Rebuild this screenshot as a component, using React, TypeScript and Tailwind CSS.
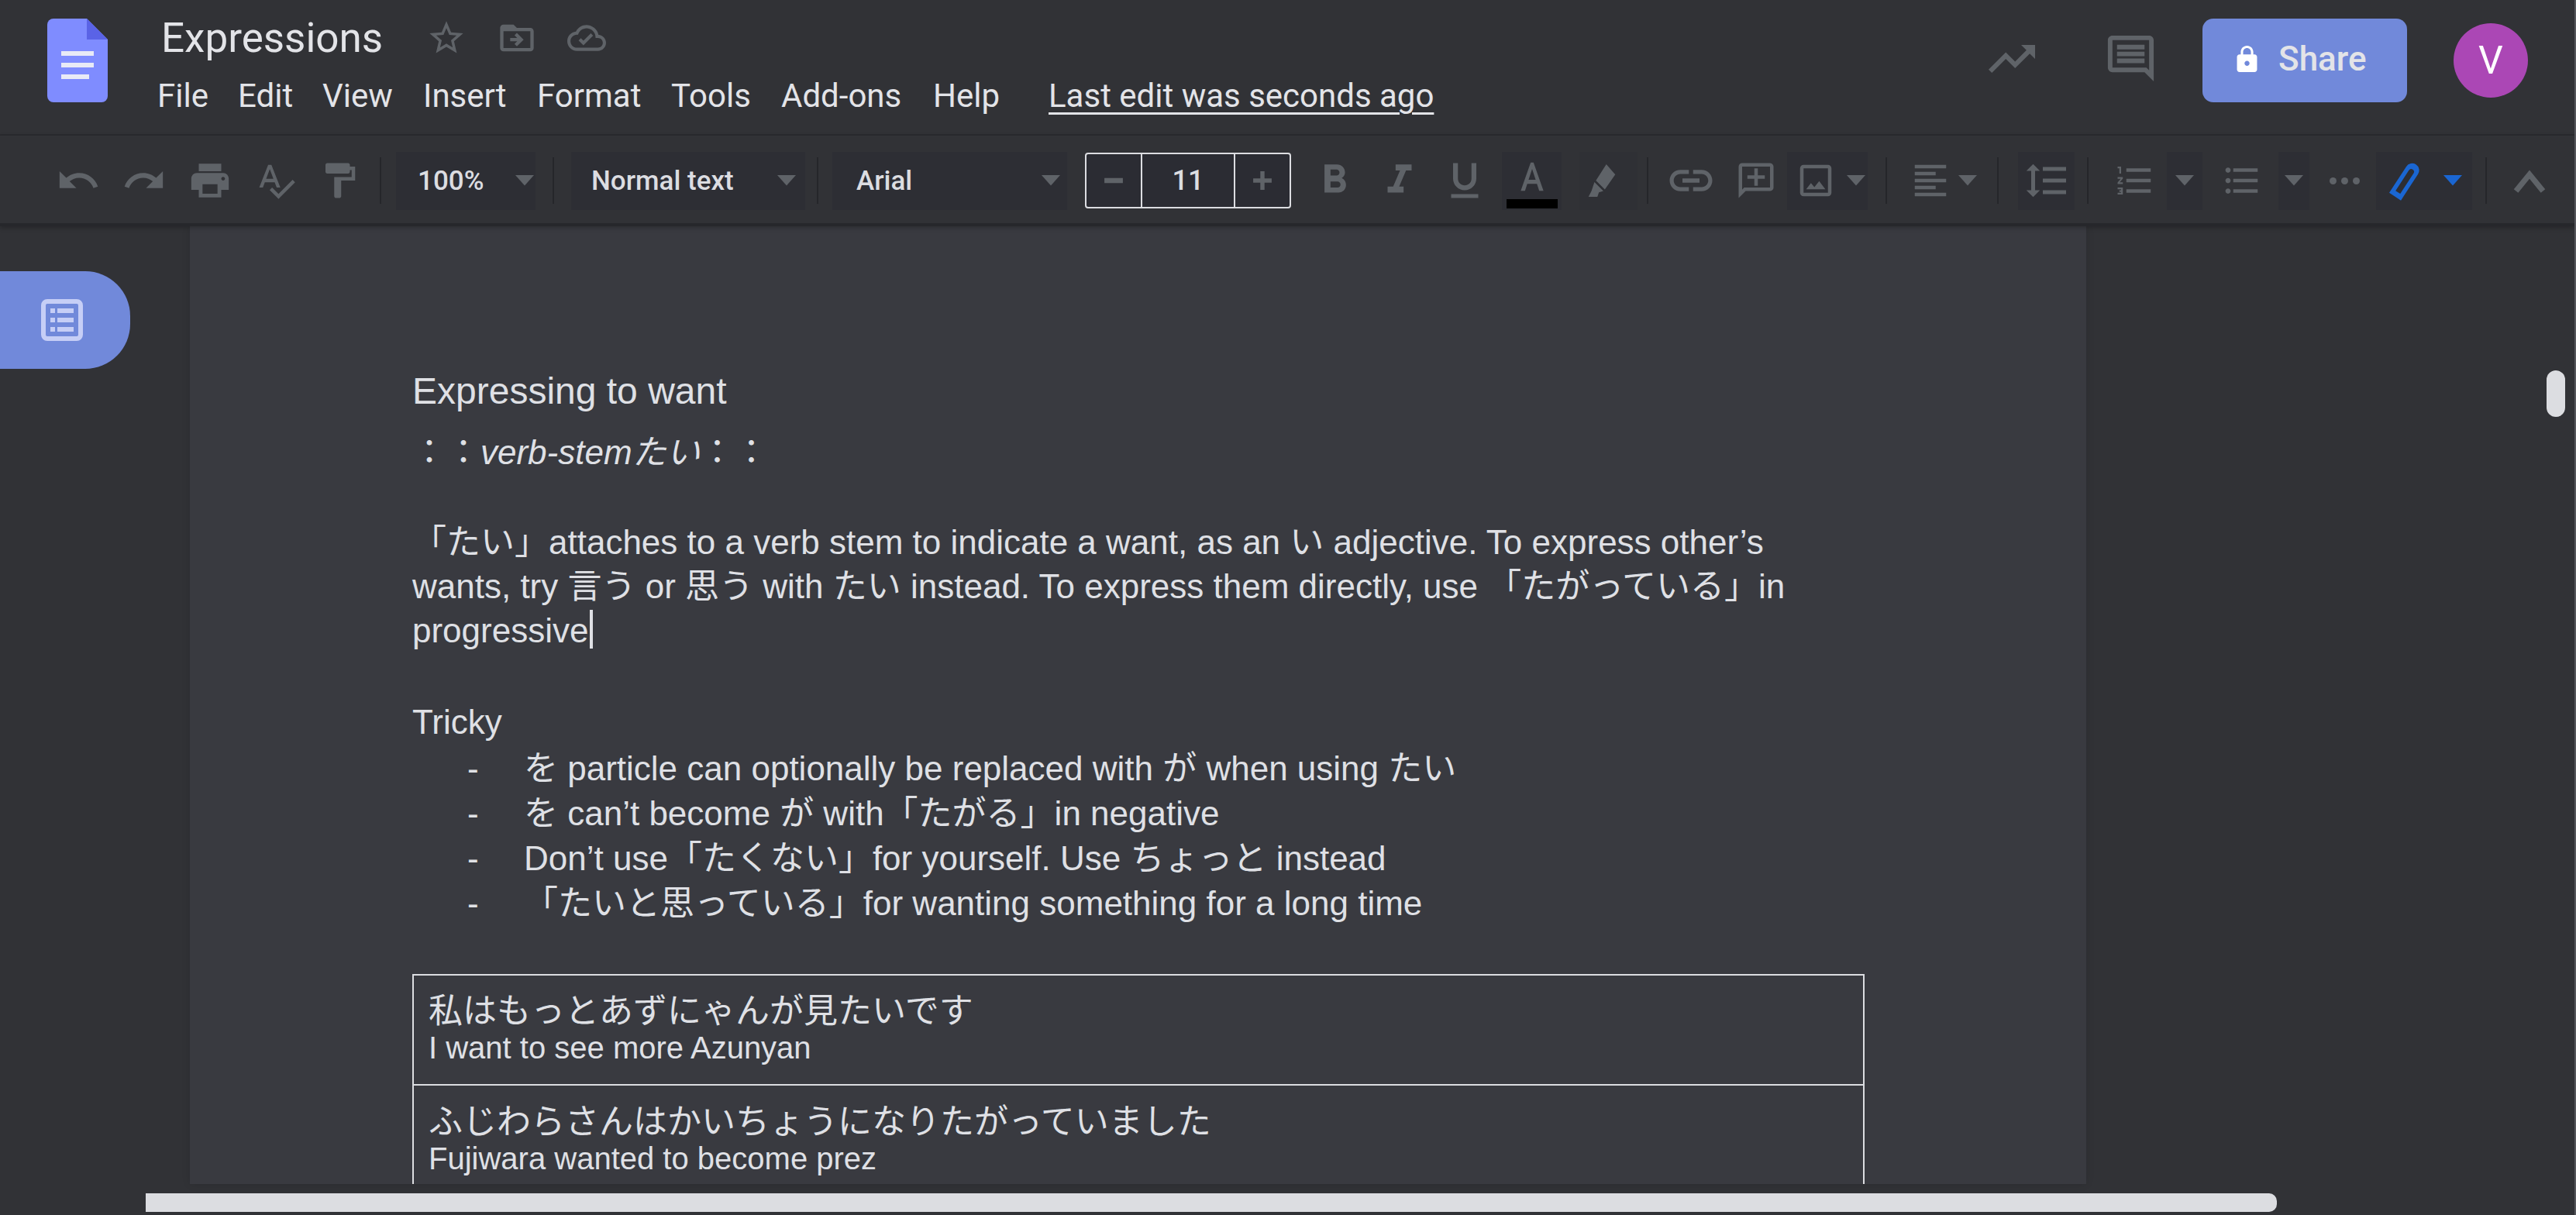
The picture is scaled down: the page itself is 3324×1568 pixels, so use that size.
import type { ReactNode } from 'react';

const GREY = '#5f6368';

function Caret({ color = GREY, size = 24 }: { color?: string; size?: number }) {
  return (
    <svg width={size} height={size * 0.56} viewBox="0 0 10 5.6" className="shrink-0">
      <path d="M0 0h10L5 5.6z" fill={color} />
    </svg>
  );
}

function Icon({ size = 58, children }: { size?: number; children: ReactNode }) {
  return (
    <svg width={size} height={size} viewBox="0 0 24 24" fill={GREY} className="shrink-0">
      {children}
    </svg>
  );
}

function Sep() {
  return <div className="w-[2px] h-[60px] bg-[#25262a] shrink-0" />;
}

function Gap({ w }: { w: string }) {
  return <div className={`${w} shrink-0`} />;
}

function ToolBtn({ w, dark, children }: { w: string; dark?: boolean; children: ReactNode }) {
  return (
    <div className={`${w} h-[75px] shrink-0 flex items-center justify-center ${dark ? 'bg-[#2d2e34]' : ''}`}>
      {children}
    </div>
  );
}

function Select({ w, pl, label, labelW }: { w: string; pl: string; label: string; labelW: string }) {
  return (
    <div className={`${w} ${pl} h-[75px] shrink-0 flex items-center bg-[#2d2e34]`}>
      <span className={`${labelW} text-[35px] leading-none font-medium text-[#dcdde1]`}>{label}</span>
      <Caret />
    </div>
  );
}

function DocsLogo() {
  return (
    <svg width="78" height="108" viewBox="0 0 78 108" className="shrink-0">
      <path d="M8 0h43l27 27v73a8 8 0 0 1-8 8H8a8 8 0 0 1-8-8V8a8 8 0 0 1 8-8z" fill="#7f8cff" />
      <path d="M51 0l27 27H51z" fill="#5a63e6" />
      <rect x="18" y="42" width="42" height="6" fill="#e8eaf6" />
      <rect x="18" y="57" width="42" height="6" fill="#e8eaf6" />
      <rect x="18" y="72" width="36" height="6" fill="#e8eaf6" />
    </svg>
  );
}

const MENUS = [
  ['File', 'w-[104px]'],
  ['Edit', 'w-[109px]'],
  ['View', 'w-[130px]'],
  ['Insert', 'w-[147px]'],
  ['Format', 'w-[173px]'],
  ['Tools', 'w-[142px]'],
  ['Add-ons', 'w-[196px]'],
  ['Help', 'w-[149px]'],
];

function Header() {
  return (
    <div className="h-[175px] flex border-b-2 border-[#2a2b2f] font-['Roboto',sans-serif] text-[#e3e4e8]">
      <div className="pl-[61px] pt-[24px] w-[203px] shrink-0">
        <DocsLogo />
      </div>
      <div className="flex-1 pt-[18px]">
        <div className="h-[62px] flex items-center pl-[5px]">
          <span className="w-[342px] text-[53px] leading-none">Expressions</span>
          <div className="w-[91px]">
            <Icon size={52}>
              <path d="M22 9.24l-7.19-.62L12 2 9.19 8.63 2 9.24l5.46 4.73L5.82 21 12 17.27 18.18 21l-1.63-7.03L22 9.24zM12 15.4l-3.76 2.27 1-4.28-3.32-2.88 4.38-.38L12 6.1l1.71 4.04 4.38.38-3.32 2.88 1 4.28L12 15.4z" />
            </Icon>
          </div>
          <div className="w-[91px]">
            <Icon size={52}>
              <path d="M20 6h-8l-2-2H4c-1.1 0-2 .9-2 2v12c0 1.1.9 2 2 2h16c1.1 0 2-.9 2-2V8c0-1.1-.9-2-2-2zm0 12H4V8h16v10zm-8.01-9l-1.41 1.41L12.16 12H8v2h4.16l-1.59 1.59L11.99 17 16 13.01 11.99 9z" />
            </Icon>
          </div>
          <Icon size={50}>
            <path d="M19.35 10.04A7.49 7.49 0 0 0 12 4C9.11 4 6.6 5.64 5.35 8.04A5.994 5.994 0 0 0 0 14c0 3.31 2.69 6 6 6h13c2.76 0 5-2.24 5-5 0-2.64-2.05-4.78-4.65-4.96zM19 18H6c-2.21 0-4-1.79-4-4s1.79-4 4-4h.71C7.37 7.69 9.48 6 12 6c3.04 0 5.5 2.46 5.5 5.5v.5H19c1.66 0 3 1.34 3 3s-1.34 3-3 3zm-9-1.5l-3-3 1.41-1.41L10 13.67l4.59-4.58L16 10.5l-6 6z" />
          </Icon>
        </div>
        <div className="h-[60px] mt-[14px] flex items-center text-[42px] leading-none">
          {MENUS.map(([label, w]) => (
            <span key={label} className={w}>{label}</span>
          ))}
          <span className="underline decoration-[3px] underline-offset-[7px]">Last edit was seconds ago</span>
        </div>
      </div>
      <div className="w-[282px] shrink-0 flex items-start pt-[40px]">
        <div className="w-[154px]">
          <Icon size={72}>
            <path d="M16 6l2.29 2.29-4.88 4.88-4-4L2 16.59 3.41 18l6-6 4 4 6.3-6.29L22 12V6z" />
          </Icon>
        </div>
        <Icon size={71}>
          <path d="M21.99 4c0-1.1-.89-2-1.99-2H4c-1.1 0-2 .9-2 2v12c0 1.1.9 2 2 2h14l4 4-.01-18zM20 4v13.17L18.83 16H4V4h16zM6 12h12v2H6zm0-3h12v2H6zm0-3h12v2H6z" />
        </Icon>
      </div>
      <div className="w-[264px] h-[108px] mt-[24px] pb-[4px] shrink-0 rounded-[14px] bg-[#7189da] flex items-center pl-[44px] gap-[27px]">
        <svg width="27" height="34" viewBox="4 1 16 21" fill="#fff" className="shrink-0">
          <path d="M18 8h-1V6c0-2.76-2.24-5-5-5S7 3.24 7 6v2H6c-1.1 0-2 .9-2 2v10c0 1.1.9 2 2 2h12c1.1 0 2-.9 2-2V10c0-1.1-.9-2-2-2zm-6 9c-1.1 0-2-.9-2-2s.9-2 2-2 2 .9 2 2-.9 2-2 2zm3.1-9H8.9V6c0-1.71 1.39-3.1 3.1-3.1s3.1 1.39 3.1 3.1v2z" />
        </svg>
        <span className="text-[44px] leading-none font-medium text-[#e3e4e8]">Share</span>
      </div>
      <div className="w-[216px] shrink-0 pl-[60px] pt-[30px]">
        <div className="w-[96px] h-[96px] rounded-full bg-[#ab47b5] flex items-center justify-center text-[50px] leading-none text-white">
          V
        </div>
      </div>
    </div>
  );
}

function Toolbar() {
  return (
    <div className="h-[117px] pt-[3px] flex items-center pl-[58px] border-b-4 border-[#26272b] shadow-[0_2px_6px_rgba(0,0,0,0.25)] relative z-10 font-['Roboto',sans-serif]">
      <ToolBtn w="w-[85px]"><Icon><path d="M12.5 8c-2.65 0-5.05.99-6.9 2.6L2 7v9h9l-3.62-3.62c1.39-1.16 3.16-1.88 5.12-1.88 3.54 0 6.55 2.31 7.6 5.5l2.37-.78C21.08 11.03 17.15 8 12.5 8z" /></Icon></ToolBtn>
      <ToolBtn w="w-[85px]"><Icon><path d="M18.4 10.6C16.55 8.99 14.15 8 11.5 8c-4.65 0-8.58 3.03-9.96 7.22L3.9 16c1.05-3.19 4.05-5.5 7.6-5.5 1.95 0 3.73.72 5.12 1.88L13 16h9V7l-3.6 3.6z" /></Icon></ToolBtn>
      <ToolBtn w="w-[85px]"><Icon><path d="M19 8H5c-1.66 0-3 1.34-3 3v6h4v4h12v-4h4v-6c0-1.66-1.34-3-3-3zm-3 11H8v-5h8v5zm3-7c-.55 0-1-.45-1-1s.45-1 1-1 1 .45 1 1-.45 1-1 1zm-1-9H6v4h12V3z" /></Icon></ToolBtn>
      <ToolBtn w="w-[85px]"><Icon size={54}><path d="M12.45 16h2.09L9.43 3H7.57L2.46 16h2.09l1.12-3h5.64l1.14 3zm-6.02-5L8.5 5.48 10.57 11H6.43zm15.16.59l-8.09 8.09L9.83 16l-1.41 1.41 5.09 5.09L23 13l-1.41-1.41z" /></Icon></ToolBtn>
      <ToolBtn w="w-[80px]"><Icon size={54}><path d="M18 4V3c0-.55-.45-1-1-1H5c-.55 0-1 .45-1 1v4c0 .55.45 1 1 1h12c.55 0 1-.45 1-1V6h1v4H9v11c0 .55.45 1 1 1h2c.55 0 1-.45 1-1v-9h8V4h-3z" /></Icon></ToolBtn>
      <Gap w="w-[12px]" />
      <Sep />
      <Gap w="w-[19px]" />
      <div className="w-[180px] h-[75px] shrink-0 pl-[28px] flex items-center bg-[#2d2e34]">
        <span className="w-[126px] text-[35px] leading-none font-medium text-[#dcdde1]">100%</span>
        <Caret />
      </div>
      <Gap w="w-[22px]" />
      <Sep />
      <Gap w="w-[22px]" />
      <Select w="w-[302px]" pl="pl-[26px]" label="Normal text" labelW="w-[240px]" />
      <Gap w="w-[15px]" />
      <Sep />
      <Gap w="w-[18px]" />
      <Select w="w-[303px]" pl="pl-[31px]" label="Arial" labelW="w-[239px]" />
      <Gap w="w-[23px]" />
      <div className="w-[266px] h-[72px] shrink-0 flex border-2 border-[#dcdde1] rounded-[4px] bg-[#2b2c33] text-[#dcdde1]">
        <div className="w-[72px] flex items-center justify-center border-r-2 border-[#dcdde1]">
          <svg width="26" height="26" viewBox="0 0 24 24" fill={GREY}><rect x="1" y="9" width="22" height="6" /></svg>
        </div>
        <div className="flex-1 flex items-center justify-center text-[36px] leading-none font-medium">11</div>
        <div className="w-[72px] flex items-center justify-center border-l-2 border-[#dcdde1]">
          <svg width="26" height="26" viewBox="0 0 24 24" fill={GREY}><path d="M9.5 1h5v8.5H23v5h-8.5V23h-5v-8.5H1v-5h8.5z" /></svg>
        </div>
      </div>
      <Gap w="w-[14px]" />
      <ToolBtn w="w-[84px]"><Icon size={62}><path d="M15.6 10.79c.97-.67 1.65-1.77 1.65-2.79 0-2.26-1.75-4-4-4H7v14h7.04c2.09 0 3.71-1.7 3.71-3.79 0-1.52-.86-2.82-2.15-3.42zM10 6.5h3c.83 0 1.5.67 1.5 1.5s-.67 1.5-1.5 1.5h-3v-3zm3.5 9H10v-3h3.5c.83 0 1.5.67 1.5 1.5s-.67 1.5-1.5 1.5z" /></Icon></ToolBtn>
      <ToolBtn w="w-[84px]"><Icon size={62}><path d="M10 4v3h2.21l-3.42 8H6v3h8v-3h-2.21l3.42-8H18V4z" /></Icon></ToolBtn>
      <ToolBtn w="w-[84px]"><Icon size={60}><path d="M12 17c3.31 0 6-2.69 6-6V3h-2.5v8c0 1.93-1.57 3.5-3.5 3.5S8.5 12.93 8.5 11V3H6v8c0 3.31 2.69 6 6 6zm-7 2v2h14v-2H5z" /></Icon></ToolBtn>
      <Gap w="w-[6px]" />
      <div className="w-[77px] h-[75px] shrink-0 flex flex-col items-center bg-[#2d2e34]">
        <svg width="44" height="44" viewBox="0 0 24 24" fill={GREY} className="mt-[10px]"><path d="M11 2h2l7 20h-3l-1.6-5H8.6L7 22H4zm-1.5 12.2h5L12 6.5z" /></svg>
        <div className="w-[66px] h-[12px] mt-[7px] bg-black" />
      </div>
      <Gap w="w-[23px]" />
      <div className="w-[75px] h-[75px] shrink-0 flex items-center pl-[6px] bg-[#2f3035]">
        <svg width="46" height="46" viewBox="0 0 24 24" fill={GREY}>
          <path d="M15 1l6 7-7 10-6-6zM7 13l6 6-3 1-1 3H3l2-4z" />
        </svg>
      </div>
      <Gap w="w-[12px]" />
      <Sep />
      <Gap w="w-[15px]" />
      <ToolBtn w="w-[80px]"><Icon size={66}><path d="M3.9 12c0-1.71 1.39-3.1 3.1-3.1h4V7H7c-2.76 0-5 2.24-5 5s2.24 5 5 5h4v-1.9H7c-1.71 0-3.1-1.39-3.1-3.1zM8 13h8v-2H8v2zm9-6h-4v1.9h4c1.71 0 3.1 1.39 3.1 3.1s-1.39 3.1-3.1 3.1h-4V17h4c2.76 0 5-2.24 5-5s-2.24-5-5-5z" /></Icon></ToolBtn>
      <Gap w="w-[4px]" />
      <ToolBtn w="w-[80px]"><Icon size={54}><g transform="matrix(-1 0 0 1 24 0)"><path d="M22 4c0-1.1-.9-2-2-2H4c-1.1 0-2 .9-2 2v12c0 1.1.9 2 2 2h14l4 4V4zm-2 13.17L18.83 16H4V4h16v13.17zM13 5h-2v4H7v2h4v4h2v-4h4V9h-4z" /></g></Icon></ToolBtn>
      <div className="w-[104px] h-[75px] shrink-0 flex items-center pl-[10px] gap-[13px] bg-[#2d2e34]">
        <Icon size={54}><path d="M19 3H5c-1.1 0-2 .9-2 2v14c0 1.1.9 2 2 2h14c1.1 0 2-.9 2-2V5c0-1.1-.9-2-2-2zm0 16H5V5h14v14zm-5.04-6.71l-2.75 3.54-1.96-2.36L6.5 17h11l-3.54-4.71z" /></Icon>
        <Caret />
      </div>
      <Gap w="w-[23px]" />
      <Sep />
      <Gap w="w-[16px]" />
      <div className="w-[104px] h-[75px] shrink-0 flex items-center gap-[9px] pl-[13px]">
        <Icon size={54}><path d="M15 15H3v2h12v-2zm0-8H3v2h12V7zM3 13h18v-2H3v2zm0 8h18v-2H3v2zM3 3v2h18V3H3z" /></Icon>
        <Caret />
      </div>
      <Gap w="w-[22px]" />
      <Sep />
      <Gap w="w-[25px]" />
      <ToolBtn w="w-[73px]" dark><Icon size={60}><path d="M6 7h2.5L5 3.5 1.5 7H4v10H1.5L5 20.5 8.5 17H6V7zm4-2v2h12V5H10zm0 14h12v-2H10v2zm0-6h12v-2H10v2z" /></Icon></ToolBtn>
      <Gap w="w-[16px]" />
      <Sep />
      <Gap w="w-[20px]" />
      <ToolBtn w="w-[80px]"><Icon size={54}><path d="M2 17h2v.5H3v1h1v.5H2v1h3v-4H2v1zm1-9h1V4H2v1h1v3zm-1 3h1.8L2 13.1v.9h3v-1H3.2L5 10.9V10H2v1zm5-6v2h14V5H7zm0 14h14v-2H7v2zm0-6h14v-2H7v2z" /></Icon></ToolBtn>
      <Gap w="w-[1px]" />
      <ToolBtn w="w-[46px]" dark><Caret /></ToolBtn>
      <Gap w="w-[8px]" />
      <ToolBtn w="w-[86px]"><Icon size={54}><path d="M4 10.5c-.83 0-1.5.67-1.5 1.5s.67 1.5 1.5 1.5 1.5-.67 1.5-1.5-.67-1.5-1.5-1.5zm0-6c-.83 0-1.5.67-1.5 1.5S3.17 7.5 4 7.5 5.5 6.83 5.5 6 4.83 4.5 4 4.5zm0 12c-.83 0-1.5.68-1.5 1.5s.68 1.5 1.5 1.5 1.5-.68 1.5-1.5-.67-1.5-1.5-1.5zM7 19h14v-2H7v2zm0-6h14v-2H7v2zm0-8v2h14V5H7z" /></Icon></ToolBtn>
      <Gap w="w-[4px]" />
      <ToolBtn w="w-[40px]" dark><Caret /></ToolBtn>
      <Gap w="w-[26px]" />
      <div className="w-[39px] shrink-0 flex items-center justify-between">
        <span className="w-[9px] h-[9px] rounded-full bg-[#5f6368]" />
        <span className="w-[9px] h-[9px] rounded-full bg-[#5f6368]" />
        <span className="w-[9px] h-[9px] rounded-full bg-[#5f6368]" />
      </div>
      <Gap w="w-[21px]" />
      <div className="w-[124px] h-[75px] shrink-0 flex items-center pl-[11px] gap-[22px] bg-[#2d2e34]">
        <svg width="54" height="54" viewBox="0 0 24 24" className="shrink-0">
          <g transform="rotate(33 12 12)">
            <path fillRule="evenodd" fill="#1a66d2" d="M8 5a4 4 0 0 1 8 0v18H8zM10.4 6v14h3.2V6a1.6 1.6 0 0 0-3.2 0z" />
          </g>
        </svg>
        <Caret color="#1a66d2" />
      </div>
      <Gap w="w-[17px]" />
      <Sep />
      <Gap w="w-[28px]" />
      <Icon size={54}><path d="M12 6L3 17l2.5 2L12 11l6.500 8L21 17z" /></Icon>
    </div>
  );
}

function Body() {
  return (
    <div className="flex-1 min-h-0 relative overflow-hidden">
      {/* outline button floats over the margin */}
      <div className="absolute left-0 top-[58px] w-[168px] h-[126px] rounded-r-[58px] bg-[#7189da] flex items-center pl-[53px]">
        <svg width="54" height="54" viewBox="0 0 54 54" fill="#c6cef6">
          <rect x="3" y="3" width="48" height="48" rx="5" fill="none" stroke="#c6cef6" strokeWidth="6" />
          <rect x="12" y="12" width="6" height="6" />
          <rect x="21" y="12" width="21" height="6" />
          <rect x="12" y="24" width="6" height="6" />
          <rect x="21" y="24" width="21" height="6" />
          <rect x="12" y="36" width="6" height="6" />
          <rect x="21" y="36" width="21" height="6" />
        </svg>
      </div>
      <div className="absolute left-[3286px] top-[186px] w-[24px] h-[60px] rounded-full bg-[#dcdde1]" />
      <div className="ml-[245px] w-[2447px] h-[1236px] bg-[#393a40] pl-[287px] pt-[184px] overflow-hidden shadow-[0_0_10px_rgba(0,0,0,0.12)] font-['Liberation_Sans','Noto_Sans_CJK_JP',sans-serif] text-[44px] leading-[57px] text-[#dfe0e5]">
        <p className="text-[48px] h-[79px] leading-[57px]">Expressing to want</p>
        <p className="h-[116px]">：：<em>verb-stemたい</em>：：</p>
        <p className="w-[1800px]">
          「たい」attaches to a verb stem to indicate a want, as an い adjective. To express other’s wants, try 言う or 思う with たい instead. To express them directly, use 「たがっている」in progressive
          <span className="inline-block w-[4px] h-[50px] ml-[2px] -mb-[8px] bg-[#dfe0e5]" />
        </p>
        <p className="mt-[61px] h-[60px]">Tricky</p>
        <ul>
          {[
            'を particle can optionally be replaced with が when using たい',
            'を can’t become が with「たがる」in negative',
            'Don’t use「たくない」for yourself. Use ちょっと instead',
            '「たいと思っている」for wanting something for a long time',
          ].map((t) => (
            <li key={t} className="flex h-[58px]">
              <span className="w-[144px] pl-[71px] shrink-0">-</span>
              <span>{t}</span>
            </li>
          ))}
        </ul>
        <div className="mt-[62px] w-[1874px] border-x-2 border-t-2 border-[#dcdde1]">
          <div className="h-[142px] border-b-2 border-[#dcdde1] pl-[19px] pt-[19px]">
            <p className="text-[44px] leading-[54px]">私はもっとあずにゃんが見たいです</p>
            <p className="text-[40px] leading-[40px]">I want to see more Azunyan</p>
          </div>
          <div className="h-[140px] pl-[19px] pt-[20px]">
            <p className="text-[44px] leading-[54px]">ふじわらさんはかいちょうになりたがっていました</p>
            <p className="text-[40px] leading-[40px]">Fujiwara wanted to become prez</p>
          </div>
        </div>
      </div>
      <div className="ml-[188px] mt-[12px] w-[2750px] h-[24px] rounded-r-[10px] bg-[#dcdde1]" />
    </div>
  );
}

export default function App() {
  return (
    <div className="w-[3324px] h-[1568px] flex flex-col overflow-hidden bg-[#313236] border-r-2 border-[#55565b]">
      <Header />
      <Toolbar />
      <Body />
    </div>
  );
}
